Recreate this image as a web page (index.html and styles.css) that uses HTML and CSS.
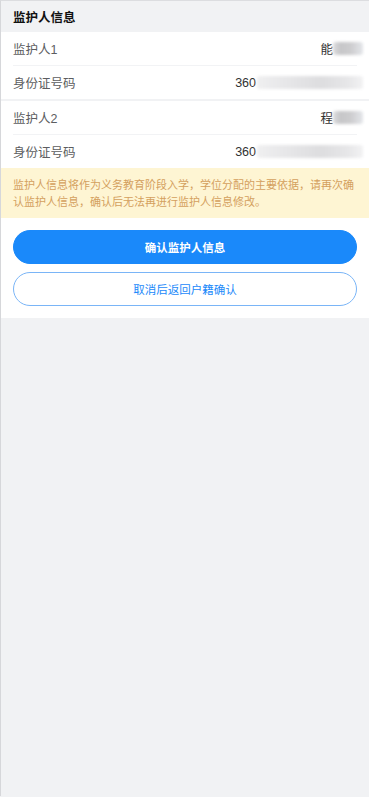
FILE: index.html
```html
<!DOCTYPE html>
<html lang="zh-CN">
<head>
<meta charset="utf-8">
<meta name="viewport" content="width=device-width, initial-scale=1">
<title>监护人信息</title>
<link rel="stylesheet" href="styles.css">
</head>
<body>
<div class="page">
  <div class="section-title">监护人信息</div>
  <div class="group">
    <div class="cell">
      <span class="label">监护人1</span>
      <span class="value">能<span class="mask mask-name"></span></span>
    </div>
    <div class="cell">
      <span class="label">身份证号码</span>
      <span class="value">360<span class="mask mask-id"></span></span>
    </div>
  </div>
  <div class="group">
    <div class="cell">
      <span class="label">监护人2</span>
      <span class="value">程<span class="mask mask-name"></span></span>
    </div>
    <div class="cell">
      <span class="label">身份证号码</span>
      <span class="value">360<span class="mask mask-id"></span></span>
    </div>
  </div>
  <div class="notice">监护人信息将作为义务教育阶段入学，学位分配的主要依据，请再次确认监护人信息，确认后无法再进行监护人信息修改。</div>
  <div class="actions">
    <button class="btn btn-primary" type="button">确认监护人信息</button>
    <button class="btn btn-plain" type="button">取消后返回户籍确认</button>
  </div>
</div>
</body>
</html>
```

FILE: styles.css
```css
html, body {
  margin: 0;
  padding: 0;
  background: #f1f2f4;
}
body {
  font-family: "Liberation Sans", "Noto Sans CJK SC", sans-serif;
  -webkit-font-smoothing: antialiased;
}
.page {
  min-height: 796px;
  border-top: 1px solid #dcdde0;
  border-left: 1px solid #d6d7da;
  box-sizing: border-box;
}
.section-title {
  height: 31px;
  display: flex;
  align-items: center;
  padding-left: 12px;
  font-size: 12.5px;
  font-weight: bold;
  color: #111;
  background: #f1f2f4;
}
.group {
  background: #fff;
  margin-bottom: 2px;
}
.group + .group {
  margin-bottom: 0;
}
.cell {
  height: 33px;
  margin: 0 12px;
  display: flex;
  align-items: center;
  justify-content: space-between;
  font-size: 12.5px;
}
.cell + .cell {
  border-top: 1px solid #f2f3f5;
}
.label {
  color: #5c5d60;
}
.value {
  color: #323233;
  display: flex;
  align-items: center;
}
.mask {
  display: inline-block;
  height: 13px;
  filter: blur(1.5px);
  border-radius: 3px;
}
.mask-name {
  width: 30px;
  margin-right: -6px;
  background: linear-gradient(90deg, #dcdcde 0%, #c6c6c8 25%, #cdcdcf 60%, #e4e6ea 100%);
}
.mask-id {
  width: 106px;
  margin-left: 1px;
  margin-right: -6px;
  background: linear-gradient(90deg, #efeff0 0%, #e6e6e8 30%, #dddddf 60%, #e6e6e8 85%, #f2f2f3 100%);
}
.notice {
  background: #fef5d3;
  color: #d4a05e;
  font-size: 11px;
  line-height: 17px;
  padding: 8px 12px;
  font-family: "Noto Sans CJK SC", sans-serif;
}
.actions {
  background: #fff;
  padding: 12px 12px;
  display: flex;
  flex-direction: column;
  gap: 8px;
}
.btn {
  height: 34px;
  border-radius: 17px;
  font-size: 11.5px;
  font-family: "Noto Sans CJK SC", sans-serif;
  width: 100%;
  box-sizing: border-box;
  cursor: pointer;
}
.btn-primary {
  background: #1a89fa;
  color: #fff;
  border: 1px solid #1a89fa;
  font-weight: bold;
}
.btn-plain {
  background: #fff;
  color: #1a89fa;
  border: 1px solid #7ab5f7;
}
```
